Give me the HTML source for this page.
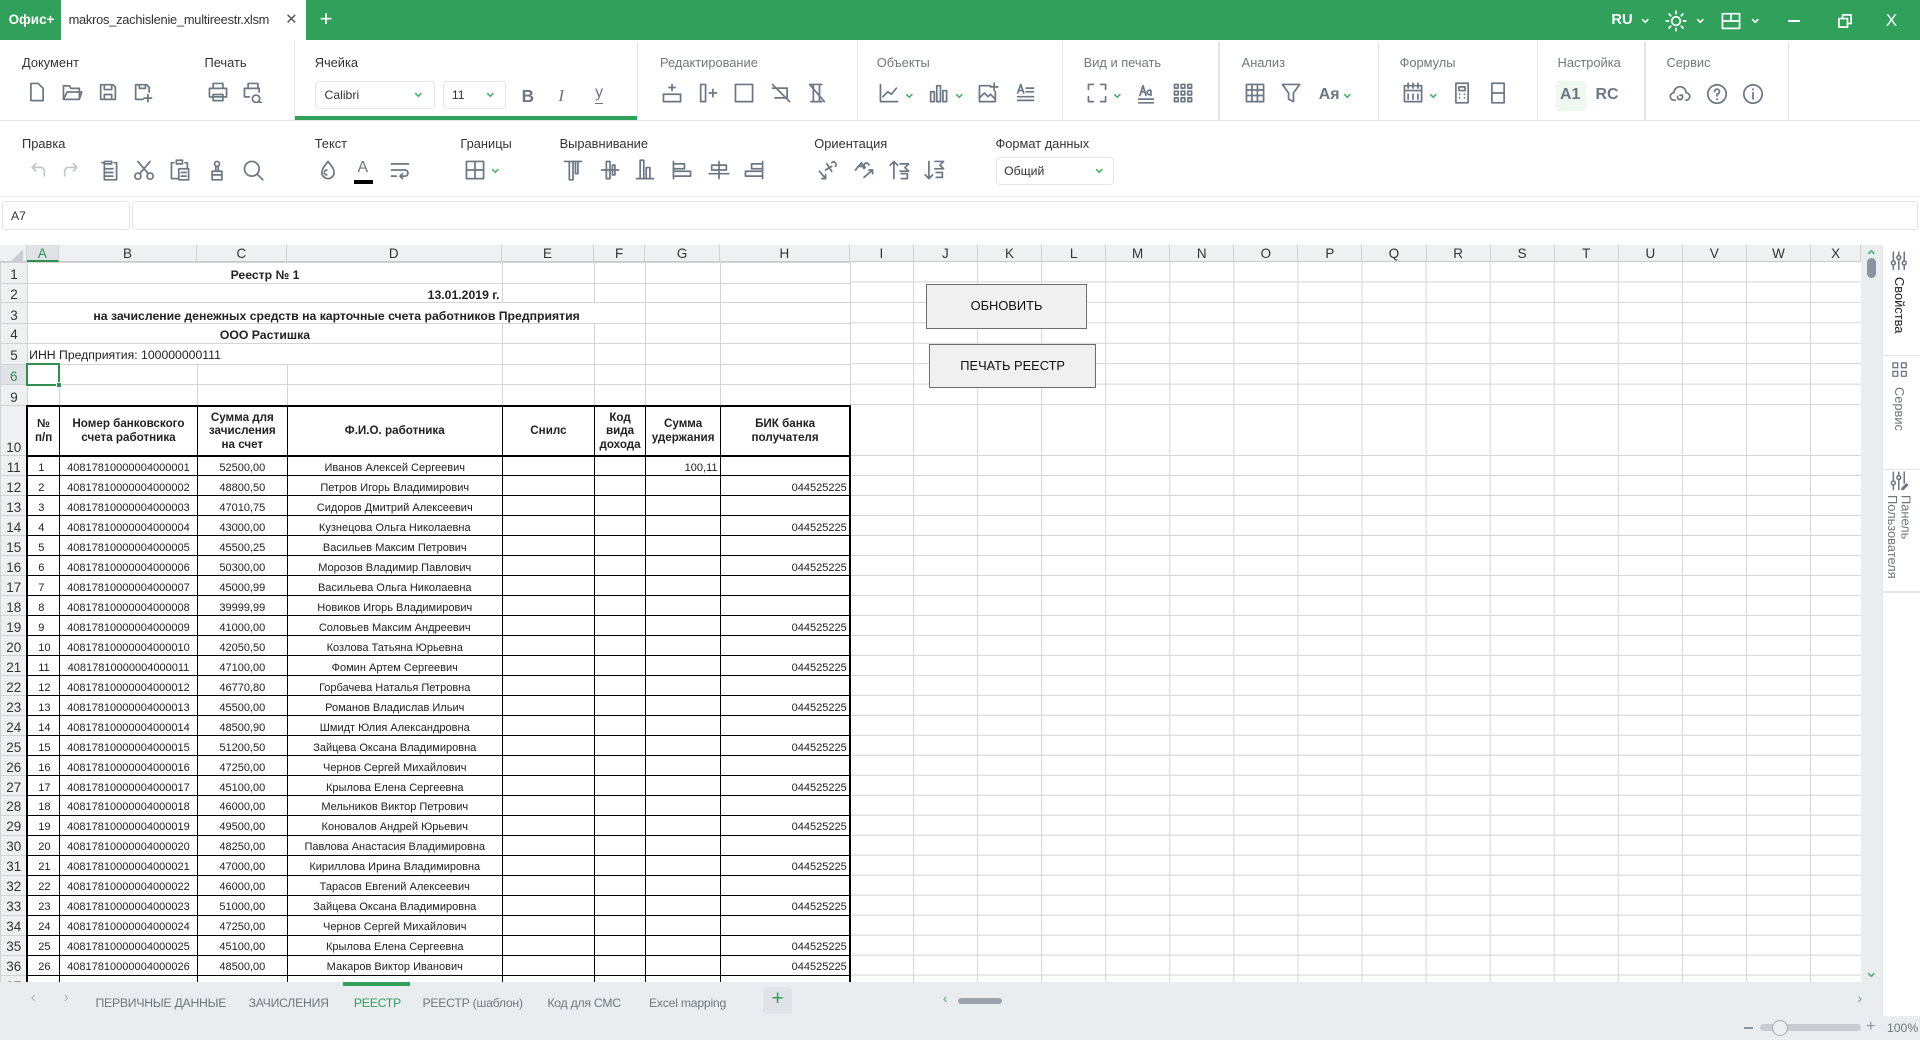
<!DOCTYPE html>
<html><head><meta charset="utf-8">
<style>
*{box-sizing:border-box;margin:0;padding:0}
html,body{width:1920px;height:1040px;overflow:hidden;background:#fff}
#r{position:relative;width:1568px;height:849px;zoom:1.22449;font-family:"Liberation Sans","DejaVu Sans",sans-serif;color:#222;overflow:hidden}
.a{position:absolute}
.t{position:absolute;white-space:nowrap}
.lbl{position:absolute;font-size:10.5px;color:#333;top:45px}
.lbl.g{color:#6f7780}
.lbl2{position:absolute;font-size:10.5px;color:#333;top:111px}
.ic{position:absolute;width:18px;height:18px;fill:none;stroke:#6b7785;stroke-width:1.4;stroke-linecap:round;stroke-linejoin:round}
.ch{position:absolute;width:7px;height:5px;fill:none;stroke:#4caf6a;stroke-width:1.3}
.sep{position:absolute;top:34px;height:64px;width:1px;background:#e3e5e8}
.colh{position:absolute;top:0;height:14px;font-size:11px;color:#333;text-align:center;line-height:14px;border-right:1px solid #d0d3d6;border-bottom:1px solid #c8ccd0;background:#eef0f2}
table{border-collapse:collapse;table-layout:fixed;position:absolute;left:0;top:14px}
td{font-size:9px;white-space:nowrap;overflow:visible;border:1px solid #d4d4d4;padding:0 2px;vertical-align:bottom;line-height:12px}
td.rh{background:#eef0f2;color:#333;font-size:11px;font-weight:normal;text-align:center;border-color:#d0d3d6;padding:0;vertical-align:bottom}
.b td.x{border-color:#000}
td.c{text-align:center}
td.rr{text-align:right}
.tb{position:absolute;top:813px;font-size:10px;letter-spacing:-0.2px;color:#6f7780}
</style></head><body><div id="r">

<!-- title bar -->
<div class="a" style="left:0;top:0;width:1568px;height:33px;background:#31a05a"></div>
<div class="t" style="left:7px;top:10px;font-size:11px;font-weight:bold;color:#fff">Офис+</div>
<div class="a" style="left:50px;top:0;width:200px;height:33px;background:#fff"></div>
<div class="t" style="left:56px;top:10px;font-size:10.5px;color:#333;letter-spacing:-0.2px">makros_zachislenie_multireestr.xlsm</div>
<div class="t" style="left:233px;top:9px;font-size:12px;color:#555">✕</div>
<div class="t" style="left:261px;top:5px;font-size:18px;color:#fff">+</div>
<div class="t" style="left:1316px;top:10px;font-size:12px;font-weight:bold;color:#fff">RU</div>
<svg class="ch" style="left:1340px;top:15px;stroke:#fff" viewBox="0 0 7 5"><path d="M1 1l2.5 2.5L6 1"/></svg>
<svg class="ic" style="left:1360px;top:8px;stroke:#fff" viewBox="0 0 18 18"><circle cx="9" cy="9" r="3.5"/><path d="M9 1v2M9 15v2M1 9h2M15 9h2M3.3 3.3l1.4 1.4M13.3 13.3l1.4 1.4M3.3 14.7l1.4-1.4M13.3 4.7l1.4-1.4"/></svg>
<svg class="ch" style="left:1385px;top:15px;stroke:#fff" viewBox="0 0 7 5"><path d="M1 1l2.5 2.5L6 1"/></svg>
<svg class="ic" style="left:1405px;top:8px;stroke:#fff" viewBox="0 0 18 18"><rect x="2" y="3" width="14" height="12"/><path d="M2 9h14M9 3v6"/></svg>
<svg class="ch" style="left:1430px;top:15px;stroke:#fff" viewBox="0 0 7 5"><path d="M1 1l2.5 2.5L6 1"/></svg>
<div class="a" style="left:1460px;top:16px;width:10px;height:2px;background:#fff"></div>
<svg class="ic" style="left:1498px;top:8px;stroke:#fff" viewBox="0 0 18 18"><rect x="4" y="7" width="7" height="7"/><path d="M7 7V4h7v7h-3"/></svg>
<div class="t" style="left:1540px;top:8px;font-size:14px;color:#fff">X</div>

<!-- ribbon row 1 -->
<div class="a" style="left:0;top:98px;width:1568px;height:1px;background:#e3e5e8"></div>
<div class="a" style="left:240px;top:95px;width:280px;height:3px;background:#31a05a"></div>
<div class="sep" style="left:240px"></div><div class="sep" style="left:520px"></div><div class="sep" style="left:700px"></div><div class="sep" style="left:867px"></div><div class="sep" style="left:995px"></div><div class="sep" style="left:1125px"></div><div class="sep" style="left:1255px"></div><div class="sep" style="left:1343px"></div><div class="sep" style="left:1460px"></div>
<div class="lbl" style="left:18px">Документ</div>
<div class="lbl" style="left:167px">Печать</div>
<div class="lbl" style="left:257px">Ячейка</div>
<div class="lbl g" style="left:539px">Редактирование</div>
<div class="lbl g" style="left:716px">Объекты</div>
<div class="lbl g" style="left:885px">Вид и печать</div>
<div class="lbl g" style="left:1014px">Анализ</div>
<div class="lbl g" style="left:1143px">Формулы</div>
<div class="lbl g" style="left:1272px">Настройка</div>
<div class="lbl g" style="left:1361px">Сервис</div>

<svg class="ic" style="left:21px;top:66px" viewBox="0 0 18 18"><path d="M4 2h6l4 4v10H4z"/></svg>
<svg class="ic" style="left:50px;top:66px" viewBox="0 0 18 18"><path d="M2 4h5l1 2h7v9H2z M2 15l3-6h12l-2 6"/></svg>
<svg class="ic" style="left:79px;top:66px" viewBox="0 0 18 18"><path d="M3 3h10l2 2v10H3z M6 3v4h6V3 M6 15v-4h6v4"/></svg>
<svg class="ic" style="left:108px;top:66px" viewBox="0 0 18 18"><path d="M3 3h9l2 2v4 M3 3v12h6 M6 3v3h5V3 M13 11v6M10 14h6"/></svg>
<svg class="ic" style="left:169px;top:66px" viewBox="0 0 18 18"><path d="M5 6V2h8v4 M2 6h14v7H2z M5 11h8v5H5z"/></svg>
<svg class="ic" style="left:198px;top:66px" viewBox="0 0 18 18"><path d="M5 6V2h8v4 M2 6h12v3 M2 6v7h4 M11.5 14.5m-3 0a3 3 0 1 0 6 0a3 3 0 1 0-6 0 M14 17l2 1"/></svg>

<div class="a" style="left:257px;top:66px;width:98px;height:23px;border:1px solid #e3e5e8;border-radius:3px"></div>
<div class="t" style="left:265px;top:72px;font-size:10px;color:#333">Calibri</div>
<svg class="ch" style="left:338px;top:75px" viewBox="0 0 7 5"><path d="M1 1l2.5 2.5L6 1"/></svg>
<div class="a" style="left:362px;top:66px;width:51px;height:23px;border:1px solid #e3e5e8;border-radius:3px"></div>
<div class="t" style="left:369px;top:72px;font-size:10px;color:#333">11</div>
<svg class="ch" style="left:397px;top:75px" viewBox="0 0 7 5"><path d="M1 1l2.5 2.5L6 1"/></svg>
<div class="t" style="left:426px;top:70px;font-size:14px;font-weight:bold;color:#6b7785">B</div>
<div class="t" style="left:456px;top:70px;font-size:14px;font-style:italic;color:#6b7785;font-family:'Liberation Serif',serif">I</div>
<div class="t" style="left:486px;top:69px;font-size:13px;color:#6b7785;border-bottom:1.5px solid #6b7785;line-height:15px">у</div>

<svg class="ic" style="left:540px;top:67px" viewBox="0 0 18 18"><path d="M2 10h14v6H2z M9 2v5M6.5 4.5h5"/></svg>
<svg class="ic" style="left:569px;top:67px" viewBox="0 0 18 18"><path d="M3 2h4v14H3z M10 9h6M13 6v6"/></svg>
<svg class="ic" style="left:599px;top:67px" viewBox="0 0 18 18"><rect x="2" y="2" width="14" height="14"/></svg>
<svg class="ic" style="left:629px;top:67px" viewBox="0 0 18 18"><path d="M2 5h12v8H4 M2 2l14 14"/></svg>
<svg class="ic" style="left:658px;top:67px" viewBox="0 0 18 18"><path d="M4 2h9M4 16h9M6 2v14M11 2v14M3 2l12 14"/></svg>

<svg class="ic" style="left:717px;top:67px" viewBox="0 0 18 18"><path d="M2 2v14h14 M4 12l4-4 3 2 4-5"/></svg>
<svg class="ch" style="left:739px;top:76px" viewBox="0 0 7 5"><path d="M1 1l2.5 2.5L6 1"/></svg>
<svg class="ic" style="left:757px;top:67px" viewBox="0 0 18 18"><path d="M3 8h3v8H3z M8 3h3v13H8z M13 7h3v9h-3z"/></svg>
<svg class="ch" style="left:780px;top:76px" viewBox="0 0 7 5"><path d="M1 1l2.5 2.5L6 1"/></svg>
<svg class="ic" style="left:798px;top:67px" viewBox="0 0 18 18"><path d="M11 3H2v13h13V8 M2 13l4-4 3 3 2-2 4 4 M14 1v6M11 4h6"/></svg>
<svg class="ic" style="left:828px;top:67px" viewBox="0 0 18 18"><path d="M3 15h13M3 12h13M10 8h6M10 5h6M3 9l2.5-7L8 9M4 7h3"/></svg>

<svg class="ic" style="left:887px;top:67px" viewBox="0 0 18 18"><path d="M2 6V2h4M12 2h4v4M16 12v4h-4M6 16H2v-4"/></svg>
<svg class="ch" style="left:909px;top:76px" viewBox="0 0 7 5"><path d="M1 1l2.5 2.5L6 1"/></svg>
<svg class="ic" style="left:927px;top:67px" viewBox="0 0 18 18"><path d="M3 17h12M3 14h12M4 11l2.5-8L9 11M5 8h3M13 11V7a2 2 0 0 0-3 1v1a2 2 0 0 0 3 1"/></svg>
<svg class="ic" style="left:957px;top:67px" viewBox="0 0 18 18"><path d="M2 2h3v3H2zM7.5 2h3v3h-3zM13 2h3v3h-3zM2 7.5h3v3H2zM7.5 7.5h3v3h-3zM13 7.5h3v3h-3zM2 13h3v3H2zM7.5 13h3v3h-3zM13 13h3v3h-3z"/></svg>

<svg class="ic" style="left:1016px;top:67px" viewBox="0 0 18 18"><path d="M2 2h14v14H2zM2 6.5h14M2 11h14M6.5 2v14M11 2v14"/></svg>
<svg class="ic" style="left:1045px;top:67px" viewBox="0 0 18 18"><path d="M2 2h14l-5 7v7l-4-2V9z"/></svg>
<div class="t" style="left:1077px;top:70px;font-size:13px;font-weight:bold;color:#6b7785">Ая</div>
<svg class="ch" style="left:1097px;top:76px" viewBox="0 0 7 5"><path d="M1 1l2.5 2.5L6 1"/></svg>

<svg class="ic" style="left:1145px;top:67px" viewBox="0 0 18 18"><path d="M2 3h14v13H2zM2 7h14M5 1v4M9 1v4M13 1v4M5 10v4M9 10v4M13 10v4"/></svg>
<svg class="ch" style="left:1167px;top:76px" viewBox="0 0 7 5"><path d="M1 1l2.5 2.5L6 1"/></svg>
<svg class="ic" style="left:1185px;top:67px" viewBox="0 0 18 18"><path d="M4 1h10v16H4zM6.5 4h5v3h-5zM7 10h0M11 10h0M7 13h0M11 13h0"/></svg>
<svg class="ic" style="left:1214px;top:67px" viewBox="0 0 18 18"><path d="M4 1h10v16H4zM4 9h10"/></svg>

<div class="a" style="left:1271px;top:66px;width:24px;height:25px;background:#eef8ef;border-radius:2px"></div>
<div class="t" style="left:1274px;top:70px;font-size:13px;font-weight:bold;color:#6b7785">A1</div>
<div class="t" style="left:1303px;top:70px;font-size:13px;font-weight:bold;color:#6b7785">RC</div>

<svg class="ic" style="left:1363px;top:68px" viewBox="0 0 18 18"><path d="M5 14H4a3 3 0 0 1 0-6 5 5 0 0 1 10 0 3 3 0 0 1 0 6 M7 11a2 2 0 1 0 4 1M11 12l0-2h-2"/></svg>
<svg class="ic" style="left:1393px;top:68px" viewBox="0 0 18 18"><circle cx="9" cy="9" r="7.5"/><path d="M7 7a2 2 0 1 1 2 2v1.5M9 13v.5"/></svg>
<svg class="ic" style="left:1423px;top:68px" viewBox="0 0 18 18"><circle cx="9" cy="9" r="7.5"/><path d="M9 8v5M9 5v.5"/></svg>

<!-- ribbon row 2 -->
<div class="lbl2" style="left:18px">Правка</div>
<div class="lbl2" style="left:257px">Текст</div>
<div class="lbl2" style="left:376px">Границы</div>
<div class="lbl2" style="left:457px">Выравнивание</div>
<div class="lbl2" style="left:665px">Ориентация</div>
<div class="lbl2" style="left:813px">Формат данных</div>

<svg class="ic" style="left:21px;top:131px;stroke:#c3c8ce" viewBox="0 0 18 18"><path d="M5 6h7a3 3 0 0 1 3 3v4M5 6l3-3M5 6l3 3"/></svg>
<svg class="ic" style="left:50px;top:131px;stroke:#c3c8ce" viewBox="0 0 18 18"><path d="M13 6H6a3 3 0 0 0-3 3v4M13 6l-3-3M13 6l-3 3"/></svg>
<svg class="ic" style="left:79px;top:130px" viewBox="0 0 18 18"><path d="M6 2h6v2H6zM4 3h2v14h10V3h-2 M7 8h6M7 11h6M7 14h6"/></svg>
<svg class="ic" style="left:109px;top:130px" viewBox="0 0 18 18"><circle cx="4" cy="14" r="2.5"/><circle cx="14" cy="14" r="2.5"/><path d="M5.5 12L14 2M12.5 12L4 2"/></svg>
<svg class="ic" style="left:138px;top:130px" viewBox="0 0 18 18"><path d="M6 1h5v3H6zM4 3H2v13h5 M13 3h2v4 M8 8h8v9H8zM10 11h4M10 14h4"/></svg>
<svg class="ic" style="left:168px;top:130px" viewBox="0 0 18 18"><circle cx="9" cy="4" r="2"/><path d="M8 6v4M10 6v4M5 10h8v7H5zM5 13h8"/></svg>
<svg class="ic" style="left:198px;top:130px" viewBox="0 0 18 18"><circle cx="8" cy="8" r="6"/><path d="M12.5 12.5L17 17"/></svg>

<svg class="ic" style="left:259px;top:130px" viewBox="0 0 18 18"><path d="M9 2c3 4 5 6 5 9a5 5 0 0 1-10 0c0-3 2-5 5-9zM8 9a2 2 0 0 0 0 4"/></svg>
<div class="t" style="left:292px;top:130px;font-size:13px;color:#6b7785">A</div>
<div class="a" style="left:289px;top:147px;width:16px;height:3px;background:#000"></div>
<svg class="ic" style="left:318px;top:130px" viewBox="0 0 18 18"><path d="M2 4h14M2 9h11a2.5 2.5 0 0 1 0 5H9M11 12l-2 2 2 2M2 14h4"/></svg>

<svg class="ic" style="left:379px;top:130px" viewBox="0 0 18 18"><path d="M2 2h14v14H2zM2 9h14M9 2v14"/></svg>
<svg class="ch" style="left:401px;top:137px" viewBox="0 0 7 5"><path d="M1 1l2.5 2.5L6 1"/></svg>

<svg class="ic" style="left:459px;top:130px" viewBox="0 0 18 18"><path d="M2 2h14M6 2v15h3V2M11 2v10h2V2"/></svg>
<svg class="ic" style="left:489px;top:130px" viewBox="0 0 18 18"><path d="M2 9h14M6 2h3v14H6zM11 5h2v8h-2z"/></svg>
<svg class="ic" style="left:518px;top:130px" viewBox="0 0 18 18"><path d="M2 16h14M5 1h3v15H5zM10 7h3v9h-3z"/></svg>
<svg class="ic" style="left:548px;top:130px" viewBox="0 0 18 18"><path d="M2 2v14M2 4h9v4H2M2 10h14v4H2"/></svg>
<svg class="ic" style="left:578px;top:130px" viewBox="0 0 18 18"><path d="M9 2v14M3 5h12v4H3zM1 12h16"/></svg>
<svg class="ic" style="left:607px;top:130px" viewBox="0 0 18 18"><path d="M16 2v14M16 4H7v4h9M16 10H2v4h14"/></svg>

<svg class="ic" style="left:667px;top:130px" viewBox="0 0 18 18"><path d="M2 10l5 6M7 16v-3M7 16H4 M8 4l4 6M7 9l5-3M12 3a2 2 0 1 1 3 3"/></svg>
<svg class="ic" style="left:697px;top:130px" viewBox="0 0 18 18"><path d="M9 15l7-6M16 9v3M16 9h-3 M2 9l5-6 2 5M4 6h4M10 7a2 2 0 1 1 3-2"/></svg>
<svg class="ic" style="left:726px;top:130px" viewBox="0 0 18 18"><path d="M4 2v14M1 5l3-3 3 3 M9 4h7l-3 3 3 3H9M10 12h5v4h-5"/></svg>
<svg class="ic" style="left:755px;top:130px" viewBox="0 0 18 18"><path d="M4 2v14M1 13l3 3 3-3 M9 2h7l-3 3 3 3H9M10 11h5v4h-5"/></svg>

<div class="a" style="left:813px;top:128px;width:97px;height:23px;border:1px solid #e3e5e8;border-radius:3px"></div>
<div class="t" style="left:820px;top:134px;font-size:10px;color:#333">Общий</div>
<svg class="ch" style="left:894px;top:137px" viewBox="0 0 7 5"><path d="M1 1l2.5 2.5L6 1"/></svg>

<!-- formula bar -->
<div class="a" style="left:0;top:160px;width:1568px;height:1px;background:#eceef0"></div>
<div class="a" style="left:2px;top:164px;width:104px;height:24px;border:1px solid #e3e5e8;border-radius:3px"></div>
<div class="t" style="left:9px;top:171px;font-size:10px;color:#333">A7</div>
<div class="a" style="left:108px;top:164px;width:1458px;height:24px;border:1px solid #e3e5e8;border-radius:3px"></div>

<!-- grid -->
<div class="a" style="left:0;top:200px;width:1520px;height:602px;overflow:hidden;background:#fff">
  <div class="a" style="left:694px;top:14px;width:826px;height:117px;background-image:linear-gradient(to bottom,transparent 15.7px,#d4d4d4 15.7px,#d4d4d4 16.7px),linear-gradient(to right,transparent 51.33px,#d4d4d4 51.33px,#d4d4d4 52.33px);background-size:826px 16.7px,52.33px 117px;background-position:0 0,0 0"></div>
  <div class="a" style="left:694px;top:131px;width:826px;height:41px;border-bottom:1px solid #d4d4d4;background-image:linear-gradient(to right,transparent 51.33px,#d4d4d4 51.33px,#d4d4d4 52.33px);background-size:52.33px 41px"></div>
  <div class="a" style="left:694px;top:172px;width:826px;height:430px;background-image:linear-gradient(to bottom,transparent 15.33px,#d4d4d4 15.33px,#d4d4d4 16.33px),linear-gradient(to right,transparent 51.33px,#d4d4d4 51.33px,#d4d4d4 52.33px);background-size:826px 16.33px,52.33px 430px"></div>

  <div class="colh" style="left:0;width:22px"></div>
  <svg class="a" style="left:9px;top:3px" width="10" height="10"><path d="M10 0V10H0z" fill="#c9cdd1"/></svg>
  <div class="colh" style="left:22px;width:26px;background:#dfe2e6;color:#2f8f4e;border-bottom:2px solid #2f8f4e">A</div>
  <div class="colh" style="left:48px;width:113px">B</div>
  <div class="colh" style="left:161px;width:73px">C</div>
  <div class="colh" style="left:234px;width:176px">D</div>
  <div class="colh" style="left:410px;width:75px">E</div>
  <div class="colh" style="left:485px;width:42px">F</div>
  <div class="colh" style="left:527px;width:61px">G</div>
  <div class="colh" style="left:588px;width:106px">H</div>
  <div class="colh" style="left:694px;width:52.33px">I</div>
  <div class="colh" style="left:746.33px;width:52.33px">J</div>
  <div class="colh" style="left:798.66px;width:52.33px">K</div>
  <div class="colh" style="left:851px;width:52.33px">L</div>
  <div class="colh" style="left:903.33px;width:52.33px">M</div>
  <div class="colh" style="left:955.66px;width:52.33px">N</div>
  <div class="colh" style="left:1008px;width:52.33px">O</div>
  <div class="colh" style="left:1060.33px;width:52.33px">P</div>
  <div class="colh" style="left:1112.66px;width:52.33px">Q</div>
  <div class="colh" style="left:1165px;width:52.33px">R</div>
  <div class="colh" style="left:1217.33px;width:52.33px">S</div>
  <div class="colh" style="left:1269.66px;width:52.33px">T</div>
  <div class="colh" style="left:1322px;width:52.33px">U</div>
  <div class="colh" style="left:1374.33px;width:52.33px">V</div>
  <div class="colh" style="left:1426.66px;width:52.33px">W</div>
  <div class="colh" style="left:1479px;width:41px">X</div>

  <table>
    <colgroup><col style="width:22px"><col style="width:26px"><col style="width:113px"><col style="width:73px"><col style="width:176px"><col style="width:75px"><col style="width:42px"><col style="width:61px"><col style="width:106px"></colgroup>
    <tr style="height:17px"><td class="rh">1</td><td colspan="4" class="c" style="font-weight:bold;font-size:10px">Реестр № 1</td><td></td><td></td><td></td><td></td></tr>
    <tr style="height:16px"><td class="rh">2</td><td colspan="4" class="rr" style="font-weight:bold;font-size:10px">13.01.2019 г.</td><td></td><td></td><td></td><td></td></tr>
    <tr style="height:17px"><td class="rh">3</td><td colspan="6" class="c" style="font-weight:bold;font-size:10px">на зачисление денежных средств на карточные счета работников Предприятия</td><td></td><td></td></tr>
    <tr style="height:16px"><td class="rh">4</td><td colspan="4" class="c" style="font-weight:bold;font-size:10px">ООО Растишка</td><td></td><td></td><td></td><td></td></tr>
    <tr style="height:17px"><td class="rh">5</td><td colspan="4" style="font-size:10px;padding-left:1px">ИНН Предприятия: 100000000111</td><td></td><td></td><td></td><td></td></tr>
    <tr style="height:17px"><td class="rh" style="background:#dfe2e6;color:#2f8f4e">6</td><td style="border:2px solid #2f8f4e"></td><td></td><td></td><td></td><td></td><td></td><td></td><td></td></tr>
    <tr style="height:17px"><td class="rh">9</td><td></td><td></td><td></td><td></td><td></td><td></td><td></td><td style="border-bottom:2px solid #000"></td></tr>
    <tr style="height:41px" class="b"><td class="rh">10</td><td class="x" style="border-left:2px solid #000;border-top:2px solid #000;font-size:9.5px;font-weight:bold;text-align:center;vertical-align:middle;line-height:11px;white-space:normal;padding:0">№<br>п/п</td><td class="x c" style="border-top:2px solid #000;font-size:9.5px;font-weight:bold;vertical-align:middle;line-height:11px">Номер банковского<br>счета работника</td><td class="x c" style="border-top:2px solid #000;font-size:9.5px;font-weight:bold;vertical-align:middle;line-height:11px">Сумма для<br>зачисления<br>на счет</td><td class="x c" style="border-top:2px solid #000;font-size:9.5px;font-weight:bold;vertical-align:middle">Ф.И.О. работника</td><td class="x c" style="border-top:2px solid #000;font-size:9.5px;font-weight:bold;vertical-align:middle">Снилс</td><td class="x c" style="border-top:2px solid #000;font-size:9.5px;font-weight:bold;vertical-align:middle;line-height:11px;padding:0">Код<br>вида<br>дохода</td><td class="x c" style="border-top:2px solid #000;font-size:9.5px;font-weight:bold;vertical-align:middle;line-height:11px;padding:0">Сумма<br>удержания</td><td class="x c" style="border-top:2px solid #000;border-right:2px solid #000;font-size:9.5px;font-weight:bold;vertical-align:middle;line-height:11px">БИК банка<br>получателя</td></tr>
    <tr style="height:16.33px" class="b"><td class="rh">11</td><td class="x" style="border-left:2px solid #000;border-top:2px solid #000;padding-left:8px">1</td><td class="x c" style="border-top:2px solid #000">40817810000004000001</td><td class="x c" style="border-top:2px solid #000">52500,00</td><td class="x c" style="border-top:2px solid #000">Иванов Алексей Сергеевич</td><td class="x" style="border-top:2px solid #000"></td><td class="x" style="border-top:2px solid #000"></td><td class="x rr" style="border-top:2px solid #000">100,11</td><td class="x" style="border-top:2px solid #000;border-right:2px solid #000"></td></tr>
    <tr style="height:16.33px" class="b"><td class="rh">12</td><td class="x" style="border-left:2px solid #000;padding-left:8px">2</td><td class="x c">40817810000004000002</td><td class="x c">48800,50</td><td class="x c">Петров Игорь Владимирович</td><td class="x"></td><td class="x"></td><td class="x"></td><td class="x rr" style="border-right:2px solid #000">044525225</td></tr>
    <tr style="height:16.33px" class="b"><td class="rh">13</td><td class="x" style="border-left:2px solid #000;padding-left:8px">3</td><td class="x c">40817810000004000003</td><td class="x c">47010,75</td><td class="x c">Сидоров Дмитрий Алексеевич</td><td class="x"></td><td class="x"></td><td class="x"></td><td class="x rr" style="border-right:2px solid #000"></td></tr>
    <tr style="height:16.33px" class="b"><td class="rh">14</td><td class="x" style="border-left:2px solid #000;padding-left:8px">4</td><td class="x c">40817810000004000004</td><td class="x c">43000,00</td><td class="x c">Кузнецова Ольга Николаевна</td><td class="x"></td><td class="x"></td><td class="x"></td><td class="x rr" style="border-right:2px solid #000">044525225</td></tr>
    <tr style="height:16.33px" class="b"><td class="rh">15</td><td class="x" style="border-left:2px solid #000;padding-left:8px">5</td><td class="x c">40817810000004000005</td><td class="x c">45500,25</td><td class="x c">Васильев Максим Петрович</td><td class="x"></td><td class="x"></td><td class="x"></td><td class="x rr" style="border-right:2px solid #000"></td></tr>
    <tr style="height:16.33px" class="b"><td class="rh">16</td><td class="x" style="border-left:2px solid #000;padding-left:8px">6</td><td class="x c">40817810000004000006</td><td class="x c">50300,00</td><td class="x c">Морозов Владимир Павлович</td><td class="x"></td><td class="x"></td><td class="x"></td><td class="x rr" style="border-right:2px solid #000">044525225</td></tr>
    <tr style="height:16.33px" class="b"><td class="rh">17</td><td class="x" style="border-left:2px solid #000;padding-left:8px">7</td><td class="x c">40817810000004000007</td><td class="x c">45000,99</td><td class="x c">Васильева Ольга Николаевна</td><td class="x"></td><td class="x"></td><td class="x"></td><td class="x rr" style="border-right:2px solid #000"></td></tr>
    <tr style="height:16.33px" class="b"><td class="rh">18</td><td class="x" style="border-left:2px solid #000;padding-left:8px">8</td><td class="x c">40817810000004000008</td><td class="x c">39999,99</td><td class="x c">Новиков Игорь Владимирович</td><td class="x"></td><td class="x"></td><td class="x"></td><td class="x rr" style="border-right:2px solid #000"></td></tr>
    <tr style="height:16.33px" class="b"><td class="rh">19</td><td class="x" style="border-left:2px solid #000;padding-left:8px">9</td><td class="x c">40817810000004000009</td><td class="x c">41000,00</td><td class="x c">Соловьев Максим Андреевич</td><td class="x"></td><td class="x"></td><td class="x"></td><td class="x rr" style="border-right:2px solid #000">044525225</td></tr>
    <tr style="height:16.33px" class="b"><td class="rh">20</td><td class="x" style="border-left:2px solid #000;padding-left:8px">10</td><td class="x c">40817810000004000010</td><td class="x c">42050,50</td><td class="x c">Козлова Татьяна Юрьевна</td><td class="x"></td><td class="x"></td><td class="x"></td><td class="x rr" style="border-right:2px solid #000"></td></tr>
    <tr style="height:16.33px" class="b"><td class="rh">21</td><td class="x" style="border-left:2px solid #000;padding-left:8px">11</td><td class="x c">40817810000004000011</td><td class="x c">47100,00</td><td class="x c">Фомин Артем Сергеевич</td><td class="x"></td><td class="x"></td><td class="x"></td><td class="x rr" style="border-right:2px solid #000">044525225</td></tr>
    <tr style="height:16.33px" class="b"><td class="rh">22</td><td class="x" style="border-left:2px solid #000;padding-left:8px">12</td><td class="x c">40817810000004000012</td><td class="x c">46770,80</td><td class="x c">Горбачева Наталья Петровна</td><td class="x"></td><td class="x"></td><td class="x"></td><td class="x rr" style="border-right:2px solid #000"></td></tr>
    <tr style="height:16.33px" class="b"><td class="rh">23</td><td class="x" style="border-left:2px solid #000;padding-left:8px">13</td><td class="x c">40817810000004000013</td><td class="x c">45500,00</td><td class="x c">Романов Владислав Ильич</td><td class="x"></td><td class="x"></td><td class="x"></td><td class="x rr" style="border-right:2px solid #000">044525225</td></tr>
    <tr style="height:16.33px" class="b"><td class="rh">24</td><td class="x" style="border-left:2px solid #000;padding-left:8px">14</td><td class="x c">40817810000004000014</td><td class="x c">48500,90</td><td class="x c">Шмидт Юлия Александровна</td><td class="x"></td><td class="x"></td><td class="x"></td><td class="x rr" style="border-right:2px solid #000"></td></tr>
    <tr style="height:16.33px" class="b"><td class="rh">25</td><td class="x" style="border-left:2px solid #000;padding-left:8px">15</td><td class="x c">40817810000004000015</td><td class="x c">51200,50</td><td class="x c">Зайцева Оксана Владимировна</td><td class="x"></td><td class="x"></td><td class="x"></td><td class="x rr" style="border-right:2px solid #000">044525225</td></tr>
    <tr style="height:16.33px" class="b"><td class="rh">26</td><td class="x" style="border-left:2px solid #000;padding-left:8px">16</td><td class="x c">40817810000004000016</td><td class="x c">47250,00</td><td class="x c">Чернов Сергей Михайлович</td><td class="x"></td><td class="x"></td><td class="x"></td><td class="x rr" style="border-right:2px solid #000"></td></tr>
    <tr style="height:16.33px" class="b"><td class="rh">27</td><td class="x" style="border-left:2px solid #000;padding-left:8px">17</td><td class="x c">40817810000004000017</td><td class="x c">45100,00</td><td class="x c">Крылова Елена Сергеевна</td><td class="x"></td><td class="x"></td><td class="x"></td><td class="x rr" style="border-right:2px solid #000">044525225</td></tr>
    <tr style="height:16.33px" class="b"><td class="rh">28</td><td class="x" style="border-left:2px solid #000;padding-left:8px">18</td><td class="x c">40817810000004000018</td><td class="x c">46000,00</td><td class="x c">Мельников Виктор Петрович</td><td class="x"></td><td class="x"></td><td class="x"></td><td class="x rr" style="border-right:2px solid #000"></td></tr>
    <tr style="height:16.33px" class="b"><td class="rh">29</td><td class="x" style="border-left:2px solid #000;padding-left:8px">19</td><td class="x c">40817810000004000019</td><td class="x c">49500,00</td><td class="x c">Коновалов Андрей Юрьевич</td><td class="x"></td><td class="x"></td><td class="x"></td><td class="x rr" style="border-right:2px solid #000">044525225</td></tr>
    <tr style="height:16.33px" class="b"><td class="rh">30</td><td class="x" style="border-left:2px solid #000;padding-left:8px">20</td><td class="x c">40817810000004000020</td><td class="x c">48250,00</td><td class="x c">Павлова Анастасия Владимировна</td><td class="x"></td><td class="x"></td><td class="x"></td><td class="x rr" style="border-right:2px solid #000"></td></tr>
    <tr style="height:16.33px" class="b"><td class="rh">31</td><td class="x" style="border-left:2px solid #000;padding-left:8px">21</td><td class="x c">40817810000004000021</td><td class="x c">47000,00</td><td class="x c">Кириллова Ирина Владимировна</td><td class="x"></td><td class="x"></td><td class="x"></td><td class="x rr" style="border-right:2px solid #000">044525225</td></tr>
    <tr style="height:16.33px" class="b"><td class="rh">32</td><td class="x" style="border-left:2px solid #000;padding-left:8px">22</td><td class="x c">40817810000004000022</td><td class="x c">46000,00</td><td class="x c">Тарасов Евгений Алексеевич</td><td class="x"></td><td class="x"></td><td class="x"></td><td class="x rr" style="border-right:2px solid #000"></td></tr>
    <tr style="height:16.33px" class="b"><td class="rh">33</td><td class="x" style="border-left:2px solid #000;padding-left:8px">23</td><td class="x c">40817810000004000023</td><td class="x c">51000,00</td><td class="x c">Зайцева Оксана Владимировна</td><td class="x"></td><td class="x"></td><td class="x"></td><td class="x rr" style="border-right:2px solid #000">044525225</td></tr>
    <tr style="height:16.33px" class="b"><td class="rh">34</td><td class="x" style="border-left:2px solid #000;padding-left:8px">24</td><td class="x c">40817810000004000024</td><td class="x c">47250,00</td><td class="x c">Чернов Сергей Михайлович</td><td class="x"></td><td class="x"></td><td class="x"></td><td class="x rr" style="border-right:2px solid #000"></td></tr>
    <tr style="height:16.33px" class="b"><td class="rh">35</td><td class="x" style="border-left:2px solid #000;padding-left:8px">25</td><td class="x c">40817810000004000025</td><td class="x c">45100,00</td><td class="x c">Крылова Елена Сергеевна</td><td class="x"></td><td class="x"></td><td class="x"></td><td class="x rr" style="border-right:2px solid #000">044525225</td></tr>
    <tr style="height:16.33px" class="b"><td class="rh">36</td><td class="x" style="border-left:2px solid #000;padding-left:8px">26</td><td class="x c">40817810000004000026</td><td class="x c">48500,00</td><td class="x c">Макаров Виктор Иванович</td><td class="x"></td><td class="x"></td><td class="x"></td><td class="x rr" style="border-right:2px solid #000">044525225</td></tr>
    <tr style="height:16.33px" class="b"><td class="rh">37</td><td class="x" style="border-left:2px solid #000;padding-left:8px">27</td><td class="x c">40817810000004000027</td><td class="x c">47100,75</td><td class="x c">Смирнова Анна Олеговна</td><td class="x"></td><td class="x"></td><td class="x"></td><td class="x rr" style="border-right:2px solid #000"></td></tr>
  </table>
  <div class="a" style="left:46px;top:112px;width:5px;height:5px;background:#2f8f4e;border:1px solid #fff"></div>

  <div class="a" style="left:756px;top:32px;width:132px;height:37px;background:#f0f0f0;border:1px solid #6d6d6d;font-size:10.5px;text-align:center;line-height:35px;color:#111">ОБНОВИТЬ</div>
  <div class="a" style="left:759px;top:81px;width:136px;height:36px;background:#f0f0f0;border:1px solid #6d6d6d;font-size:10.5px;text-align:center;line-height:34px;color:#111">ПЕЧАТЬ РЕЕСТР</div>
</div>

<!-- vertical scrollbar -->
<div class="a" style="left:1520px;top:200px;width:17px;height:602px;background:#eaedf0"></div>
<svg class="ch" style="left:1525px;top:203px" viewBox="0 0 7 5"><path d="M1 4l2.5-2.5L6 4"/></svg>
<div class="a" style="left:1525px;top:211px;width:7px;height:16px;background:#8a949e;border-radius:4px"></div>
<svg class="ch" style="left:1525px;top:794px" viewBox="0 0 7 5"><path d="M1 1l2.5 2.5L6 1"/></svg>

<!-- right panel -->
<div class="a" style="left:1537px;top:200px;width:31px;height:630px;background:#fff;border-left:1px solid #e3e5e8"></div>
<svg class="ic" style="left:1543px;top:205px;width:16px;height:16px" viewBox="0 0 18 18"><path d="M4 1v16M9 1v16M14 1v16"/><circle cx="4" cy="11" r="1.8" fill="#fff"/><circle cx="9" cy="6" r="1.8" fill="#fff"/><circle cx="14" cy="11" r="1.8" fill="#fff"/></svg>
<div class="t" style="left:1545px;top:226px;font-size:10.5px;color:#222;writing-mode:vertical-rl">Свойства</div>
<div class="a" style="left:1538px;top:290px;width:30px;height:1px;background:#e3e5e8"></div>
<svg class="ic" style="left:1544px;top:295px;width:14px;height:14px" viewBox="0 0 18 18"><path d="M2 2h5v5H2zM11 2h5v5h-5zM2 11h5v5H2zM11 11h5v5h-5z"/></svg>
<div class="t" style="left:1545px;top:316px;font-size:10.5px;color:#6f7780;writing-mode:vertical-rl">Сервис</div>
<div class="a" style="left:1538px;top:383px;width:30px;height:1px;background:#e3e5e8"></div>
<svg class="ic" style="left:1543px;top:385px;width:16px;height:16px" viewBox="0 0 18 18"><path d="M4 1v16M9 1v16M14 1v10"/><circle cx="4" cy="11" r="1.8" fill="#fff"/><circle cx="9" cy="6" r="1.8" fill="#fff"/><path d="M12 16l4-4 1 1-4 4h-1z"/></svg>
<div class="t" style="left:1540px;top:404px;font-size:10.5px;color:#6f7780;writing-mode:vertical-rl;line-height:11px">Панель<br>Пользователя</div>
<div class="a" style="left:1538px;top:483px;width:30px;height:1px;background:#e3e5e8"></div>

<!-- bottom tabs -->
<div class="a" style="left:0;top:802px;width:1537px;height:47px;background:#eaedf0"></div>
<div class="a" style="left:1537px;top:830px;width:31px;height:19px;background:#eaedf0"></div>
<div class="t" style="left:25px;top:808px;font-size:13px;color:#b0b6bd">‹</div>
<div class="t" style="left:52px;top:808px;font-size:13px;color:#b0b6bd">›</div>
<div class="tb" style="left:78px">ПЕРВИЧНЫЕ ДАННЫЕ</div>
<div class="tb" style="left:203px">ЗАЧИСЛЕНИЯ</div>
<div class="a" style="left:280px;top:802px;width:55px;height:3px;background:#31a05a"></div>
<div class="tb" style="left:289px;color:#31a05a">РЕЕСТР</div>
<div class="tb" style="left:345px">РЕЕСТР (шаблон)</div>
<div class="tb" style="left:447px">Код для СМС</div>
<div class="tb" style="left:530px">Excel mapping</div>
<div class="a" style="left:623px;top:806px;width:24px;height:22px;background:#dfe2e6;border-radius:3px;color:#31a05a;font-size:17px;text-align:center;line-height:20px">+</div>
<div class="t" style="left:770px;top:809px;font-size:11px;color:#4caf6a">‹</div>
<div class="a" style="left:782px;top:815px;width:36px;height:5px;background:#9aa2ab;border-radius:3px"></div>
<div class="t" style="left:1517px;top:809px;font-size:11px;color:#4caf6a">›</div>
<div class="a" style="left:1424px;top:839px;width:8px;height:1.5px;background:#8a949e"></div>
<div class="a" style="left:1437px;top:836px;width:83px;height:6px;background:#c9cdd1;border-radius:3px"></div>
<div class="a" style="left:1447px;top:833px;width:13px;height:13px;background:#eee;border:1px solid #aaa;border-radius:50%"></div>
<div class="t" style="left:1524px;top:831px;font-size:13px;color:#8a949e">+</div>
<div class="t" style="left:1541px;top:834px;font-size:10px;color:#6f7780">100%</div>

</div></body></html>
